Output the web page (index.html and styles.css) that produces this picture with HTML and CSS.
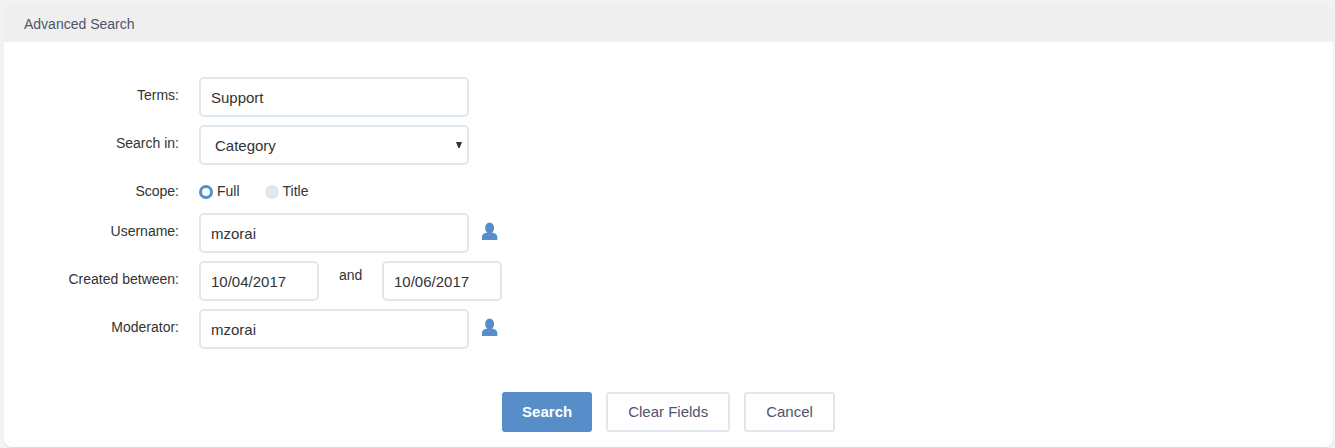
FILE: index.html
```html
<!DOCTYPE html>
<html lang="en">
<head>
<meta charset="utf-8">
<title>Advanced Search</title>
<link rel="stylesheet" href="styles.css">
</head>
<body>
<svg class="symbols" aria-hidden="true">
  <symbol id="user" viewBox="0 0 16 18">
    <ellipse cx="7.600" cy="6" rx="4.500" ry="5.600"/>
    <path d="M5.600 9h4v1.700c3.200.2 5.700 1.200 5.700 4.600V18H0v-2.700c0-3.400 2.400-4.400 5.600-4.600z"/>
  </symbol>
</svg>
<form class="card">
  <header class="card-header">Advanced Search</header>
  <div class="fields">
    <div class="row">
      <label class="label" for="terms">Terms:</label>
      <input class="control" id="terms" type="text" value="Support">
    </div>
    <div class="row">
      <label class="label" for="search-in">Search in:</label>
      <div class="select-wrap">
        <select class="control select" id="search-in"><option>Category</option></select>
        <svg class="arrow" viewBox="0 0 6 6"><path d="M0 0h6L3.600 6H2.400z"/></svg>
      </div>
    </div>
    <div class="row row-scope">
      <span class="label">Scope:</span>
      <label class="option"><input class="radio" type="radio" name="scope" checked>Full</label>
      <label class="option"><input class="radio" type="radio" name="scope">Title</label>
    </div>
    <div class="row">
      <label class="label" for="username">Username:</label>
      <input class="control" id="username" type="text" value="mzorai">
      <svg class="user"><use href="#user"/></svg>
    </div>
    <div class="row">
      <label class="label" for="from">Created between:</label>
      <input class="control date" id="from" type="text" value="10/04/2017">
      <span class="and">and</span>
      <input class="control date" type="text" value="10/06/2017">
    </div>
    <div class="row">
      <label class="label" for="moderator">Moderator:</label>
      <input class="control" id="moderator" type="text" value="mzorai">
      <svg class="user"><use href="#user"/></svg>
    </div>
  </div>
  <footer class="actions">
    <button class="button primary" type="button">Search</button>
    <button class="button" type="button">Clear Fields</button>
    <button class="button" type="button">Cancel</button>
  </footer>
</form>
</body>
</html>
```
FILE: styles.css
```css
* {
  box-sizing: border-box;
}

body {
  margin: 0;
  padding: 6px 2px 0 4px;
  height: 448px;
  overflow: hidden;
  background: #f2f2f2;
  color: #333;
  font: 14px "Liberation Sans", Arial, sans-serif;
}

.symbols {
  display: none;
}

.card {
  height: 441px;
  background: #fff;
  border-radius: 4px 4px 8px 8px;
  box-shadow: 0 1px 1px rgba(0, 0, 0, 0.1);
}

.card-header {
  height: 36px;
  padding-left: 20px;
  line-height: 36px;
  background: #efefef;
  border-radius: 4px 4px 0 0;
  color: #4e546c;
}

.fields {
  display: flex;
  flex-direction: column;
  gap: 8px;
  padding-top: 35px;
}

.row {
  display: flex;
  height: 40px;
}

.row-scope {
  height: 32px;
}

.label {
  width: 175px;
  margin-right: 20px;
  line-height: 36px;
  text-align: right;
}

.control {
  width: 270px;
  height: 40px;
  margin: 0;
  padding: 0 10px;
  border: 2px solid #e1e8ed;
  border-radius: 5px;
  background: #fff;
  color: #333;
  font: 15px "Liberation Sans", Arial, sans-serif;
}

.select-wrap {
  position: relative;
}

.select {
  appearance: none;
  padding-left: 14px;
}

.arrow {
  position: absolute;
  top: 17px;
  right: 7px;
  width: 6px;
  height: 6px;
  fill: #333;
}

.date {
  width: 120px;
}

.and {
  width: 63px;
  padding-left: 20px;
  line-height: 28px;
}

.user {
  width: 16px;
  height: 18px;
  margin: 9px 0 0 13px;
  fill: #578dc9;
}

.option {
  display: flex;
  margin-right: 25px;
  line-height: 36px;
}

.radio {
  appearance: none;
  width: 14px;
  height: 14px;
  margin: 12px 4px 0 0;
  border-radius: 50%;
  background: #e1e8ed;
}

.radio:checked {
  border: 3px solid #578dc9;
  background: #fff;
}

.actions {
  display: flex;
  justify-content: center;
  gap: 14px;
  padding-top: 43px;
}

.button {
  height: 40px;
  padding: 0 20px 2px;
  border: 2px solid #e1e8ed;
  border-radius: 3px;
  background: #fff;
  color: #4e546c;
  font: 15px "Liberation Sans", Arial, sans-serif;
}

.primary {
  padding: 0 18px 2px;
  border-color: #578dc9;
  background: #578dc9;
  color: #fff;
  font-weight: bold;
}
```
